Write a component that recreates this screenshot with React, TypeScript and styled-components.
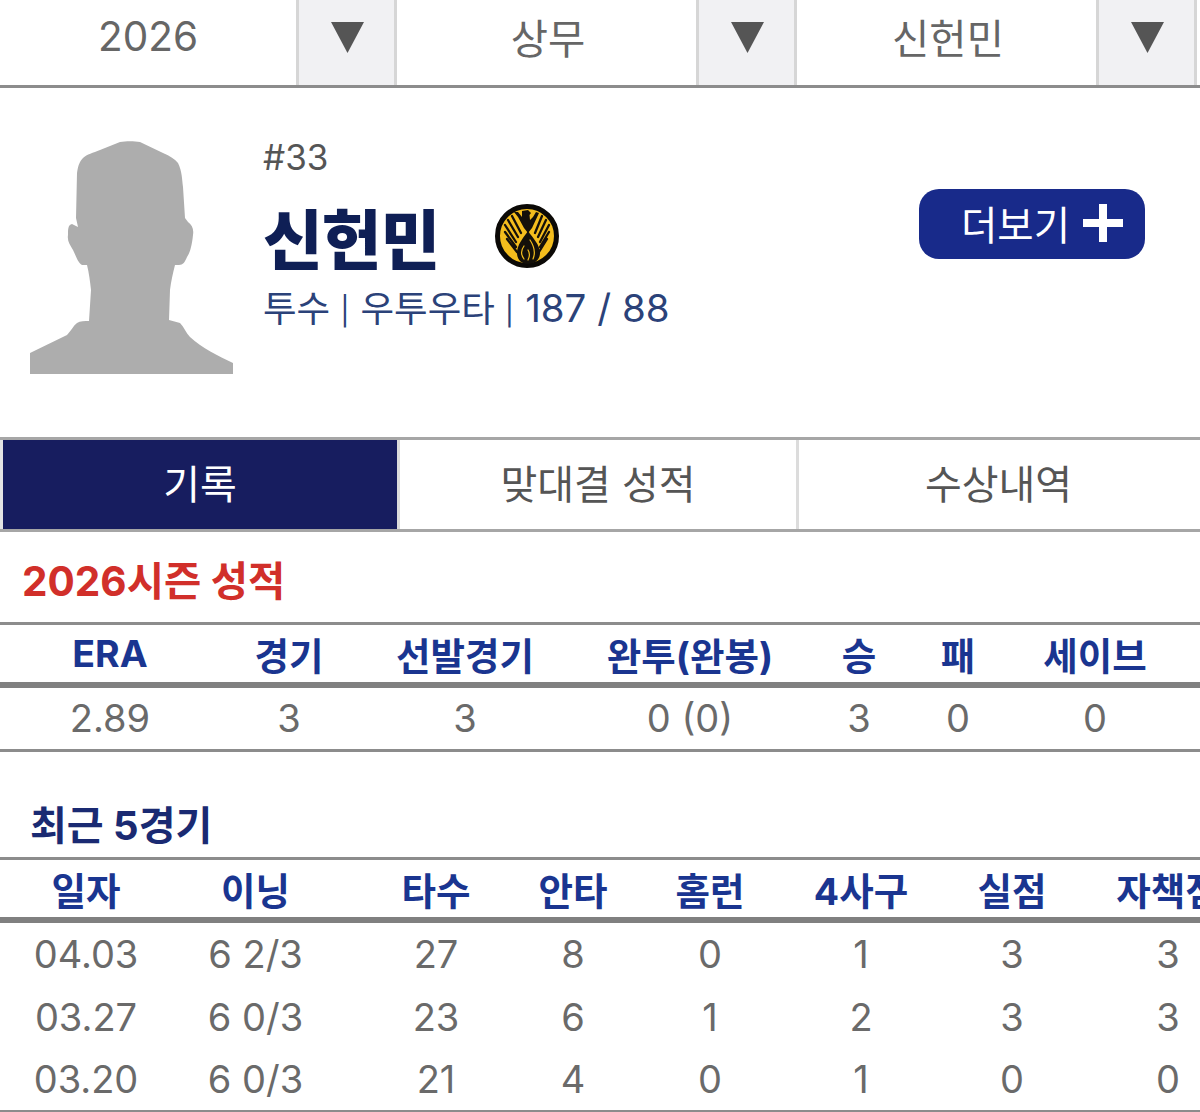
import React from "react";
import styled, { createGlobalStyle } from "styled-components";

const FONT = `"Inter", "Noto Sans CJK KR", "Liberation Sans", sans-serif`;

const GlobalStyle = createGlobalStyle`
  html, body {
    margin: 0;
    padding: 0;
    background: #ffffff;
    font-family: ${FONT};
  }
  * {
    box-sizing: border-box;
  }
`;

const Page = styled.div`
  width: 1200px;
  height: 1112px;
  overflow: hidden;
  background: #fff;
`;

const SelectBar = styled.div`
  display: flex;
  height: 88px;
  border-bottom: 3px solid #8c8c8c;
`;

const Select = styled.div`
  flex: 0 0 400px;
  display: flex;
`;

const SelectValue = styled.div`
  width: 296px;
  padding-bottom: 12px;
  display: flex;
  align-items: center;
  justify-content: center;
  font-size: 40.5px;
  color: #666;
`;

const SelectArrow = styled.div`
  width: 101px;
  padding: 0 0 11px 2px;
  display: flex;
  align-items: center;
  justify-content: center;
  background: #f1f1f3;
  border-left: 3px solid #d6d6d6;
  border-right: 3px solid #d6d6d6;
`;

const Profile = styled.div`
  height: 349px;
  padding: 49px 55px 0 30px;
  display: flex;
  align-items: flex-start;
`;

const PhotoSvg = styled.svg`
  flex: none;
  margin-top: 4px;
`;

const Info = styled.div`
  margin-left: 30px;
  flex: 1;
`;

const Number = styled.div`
  font-size: 35px;
  line-height: 40px;
  color: #555;
`;

const NameRow = styled.div`
  display: flex;
  align-items: center;
  margin-top: 21px;
  height: 76px;
`;

const Name = styled.div`
  font-size: 65px;
  font-weight: 800;
  color: #0f1f55;
  letter-spacing: -1px;
  width: 232px;
`;

const Meta = styled.div`
  margin-top: 12px;
  font-size: 36.5px;
  line-height: 44px;
  color: #2b4279;
  white-space: nowrap;
`;

const Pipe = styled.span`
  font-size: 28px;
  margin: 0 11px 0 10px;
  vertical-align: 1px;
`;

const Size = styled.span`
  font-size: 38.5px;
`;

const MoreButton = styled.div`
  margin-top: 52px;
  width: 226px;
  height: 70px;
  padding: 0 0 3px 42px;
  display: flex;
  align-items: center;
  gap: 13px;
  border-radius: 20px;
  background: #182a8a;
  color: #fff;
  font-size: 39.5px;
`;

const Tabs = styled.div`
  display: flex;
  height: 95px;
  border-top: 3px solid #a6a6a6;
  border-bottom: 3px solid #a6a6a6;
`;

const Tab = styled.div<{ $active?: boolean }>`
  flex: 0 0 ${(p) => (p.$active ? "400px" : "399px")};
  padding-bottom: 6px;
  display: flex;
  align-items: center;
  justify-content: center;
  font-size: 40px;
  color: ${(p) => (p.$active ? "#fff" : "#555")};
  background: ${(p) => (p.$active ? "#171d5f" : "#fff")};
  border-left: ${(p) => (p.$active ? "3px solid #e4e4e4" : "0")};
  border-right: 3px solid #dcdcdc;
  &:last-child {
    border-right: 0;
  }
`;

const SeasonTitle = styled.div`
  height: 90px;
  padding: 25px 0 0 22px;
  font-size: 40.5px;
  line-height: 50px;
  font-weight: 700;
  color: #d12f2a;
`;

const RecentTitle = styled.div`
  height: 105px;
  padding: 51px 0 0 30px;
  font-size: 40px;
  line-height: 46px;
  font-weight: 700;
  color: #1a2a72;
`;

const Table = styled.div`
  border-top: 3px solid #8c8c8c;
`;

const Row = styled.div<{ $cols: string }>`
  display: grid;
  grid-template-columns: ${(p) => p.$cols};
  align-items: center;
  text-align: center;
`;

const HeadRow = styled(Row)`
  height: 63px;
  padding-bottom: 1px;
  border-bottom: 6px solid #808080;
  font-size: 37.5px;
  font-weight: 700;
  color: #1a3590;
  white-space: nowrap;
`;

const BodyRow = styled(Row)<{ $line?: boolean }>`
  height: 63px;
  padding-bottom: 2px;
  font-size: 38px;
  color: #6a6a6a;
  border-bottom: ${(p) => (p.$line ? "2px solid #8c8c8c" : "0")};
`;

const SeasonRow = styled(BodyRow)`
  height: 64px;
  border-bottom: 3px solid #8c8c8c;
`;

const SEASON_COLS = "220px 138px 214px 236px 102px 96px 178px";
const RECENT_COLS = "172px 167px 194px 80px 194px 108px 194px 118px";

const seasonHead = ["ERA", "경기", "선발경기", "완투(완봉)", "승", "패", "세이브"];
const seasonRow = ["2.89", "3", "3", "0 (0)", "3", "0", "0"];
const recentHead = ["일자", "이닝", "타수", "안타", "홈런", "4사구", "실점", "자책점"];
const recentRows = [
  ["04.03", "6 2/3", "27", "8", "0", "1", "3", "3"],
  ["03.27", "6 0/3", "23", "6", "1", "2", "3", "3"],
  ["03.20", "6 0/3", "21", "4", "0", "1", "0", "0"],
];

const Arrow = () => (
  <svg width="33" height="31" viewBox="0 0 33 31">
    <path d="M0 0H33L16.500 31Z" fill="#555" />
  </svg>
);

const Silhouette = () => (
  <PhotoSvg width="203" height="233" viewBox="0 0 203 233">
    <path
      fill="#adadad"
      d="M90 1 C96 0 104 0 110 1 L133 12 C140 15 145 18 148 22 C152 30 152 38 153 46 L155 77 L158 81 C162 84 164 88 163 94 C162 104 160 112 157 116 C155 121 153 124 149 124 L145 124 C143 132 141 140 140 149 L139 179 L150 182 C154 186 156 192 160 196 C172 207 188 215 203 222 V233 H0 V212 L37 194 C41 190 43 185 47 182 C50 180 55 180 59 180 L61 149 C60 140 59 132 57 124 L52 124 C48 122 46 115 43 109 C40 104 37 100 38 94 C38 88 38 84 42 83 L48 86 L46 77 L47 32 C48 24 50 20 53 17 C57 13 63 12 70 9 Z"
    />
  </PhotoSvg>
);

const TeamLogo = () => (
  <svg width="64" height="64" viewBox="0 0 64 64">
    <circle cx="32" cy="32" r="29.500" fill="#f4bd1d" stroke="#0b0906" strokeWidth="5" />
    {/* eagle head and shoulders */}
    <path
      fill="#14100a"
      d="M27 7 L33 6 L36 9 L34.500 11 L35 16 L38 13 L41 8 L44 9 L37 24 L33 29 L29 24 L23 13 L19 8 L23 8 L27 13 Z"
    />
    {/* feathers */}
    <path
      fill="none"
      stroke="#14100a"
      strokeWidth="2.300"
      strokeLinecap="round"
      d="M17 12 L26 29 M13 16 L23 33 M10 21 L21 38 M10 28 L21 43 M12 35 L22 48 M47 12 L40 29 M51 16 L43 33 M54 21 L45 38 M54 28 L45 43 M52 35 L44 48"
    />
    {/* flame */}
    <path
      fill="#14100a"
      d="M33 27 C38 34 45 41 45 49 C45 56 39 60 33 60 C27 60 22 56 22 49 C22 41 28 34 33 27 Z"
    />
    <path
      fill="none"
      stroke="#f4bd1d"
      strokeWidth="1.200"
      strokeLinecap="round"
      d="M35 36 C39 42 41 48 38 55 M29 42 C26 46 26 51 29 55 M33 46 C35 49 35 52 33 56"
    />
  </svg>
);

const Plus = () => (
  <svg width="40" height="38" viewBox="0 0 40 38">
    <path fill="#fff" d="M16 0H24V15H40V23H24V38H16V23H0V15H16Z" />
  </svg>
);

const App: React.FC = () => {
  return (
    <Page>
      <GlobalStyle />
      <SelectBar>
        {["2026", "상무", "신헌민"].map((value) => (
          <Select key={value}>
            <SelectValue>{value}</SelectValue>
            <SelectArrow>
              <Arrow />
            </SelectArrow>
          </Select>
        ))}
      </SelectBar>

      <Profile>
        <Silhouette />
        <Info>
          <Number>#33</Number>
          <NameRow>
            <Name>신헌민</Name>
            <TeamLogo />
          </NameRow>
          <Meta>
            투수<Pipe>|</Pipe>우투우타<Pipe>|</Pipe>
            <Size>187 / 88</Size>
          </Meta>
        </Info>
        <MoreButton>
          더보기
          <Plus />
        </MoreButton>
      </Profile>

      <Tabs>
        <Tab $active>기록</Tab>
        <Tab>맞대결 성적</Tab>
        <Tab>수상내역</Tab>
      </Tabs>

      <SeasonTitle>2026시즌 성적</SeasonTitle>
      <Table>
        <HeadRow $cols={SEASON_COLS}>
          {seasonHead.map((h) => (
            <div key={h}>{h}</div>
          ))}
        </HeadRow>
        <SeasonRow $cols={SEASON_COLS}>
          {seasonRow.map((v, i) => (
            <div key={i}>{v}</div>
          ))}
        </SeasonRow>
      </Table>

      <RecentTitle>최근 5경기</RecentTitle>
      <Table>
        <HeadRow $cols={RECENT_COLS}>
          {recentHead.map((h) => (
            <div key={h}>{h}</div>
          ))}
        </HeadRow>
        {recentRows.map((row, r) => (
          <BodyRow key={row[0]} $cols={RECENT_COLS} $line={r === recentRows.length - 1}>
            {row.map((v, i) => (
              <div key={i}>{v}</div>
            ))}
          </BodyRow>
        ))}
      </Table>
    </Page>
  );
};

export default App;
